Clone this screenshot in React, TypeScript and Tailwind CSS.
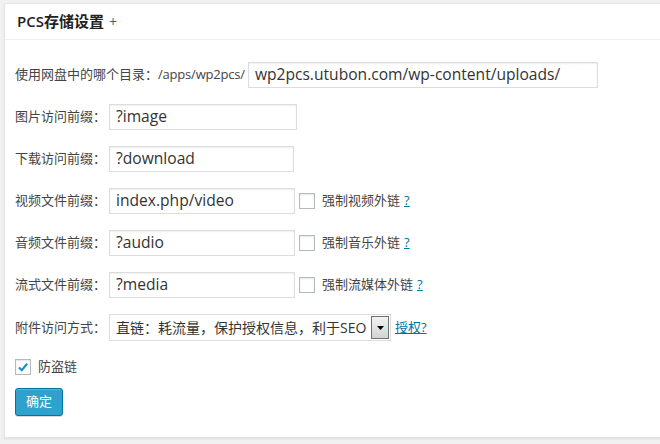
import React from 'react';

const font = "font-['Open_Sans','Noto_Sans_CJK_SC',sans-serif]";

const TextField = ({ value, width }: { value: string; width: string }) => (
  <div
    className={`h-[26px] ${width} border border-[#ddd] bg-white shadow-[inset_0_1px_2px_rgba(0,0,0,0.07)] flex items-center px-[6px] text-[15.6px] text-[#333] whitespace-nowrap overflow-hidden`}
  >
    {value}
  </div>
);

const CheckBox = ({ checked }: { checked?: boolean }) => (
  <div className="w-[16px] h-[16px] border border-[#b4b9be] bg-white shadow-[inset_0_1px_2px_rgba(0,0,0,0.1)] flex items-center justify-center shrink-0">
    {checked && (
      <svg width="12" height="12" viewBox="0 0 12 12">
        <path d="M2 6.5 L4.8 9.2 L10.2 2.6" fill="none" stroke="#1e8cbe" strokeWidth="2.2" />
      </svg>
    )}
  </div>
);

const HelpLink = ({ text }: { text: string }) => (
  <a href="#" className="text-[#0074a2] underline text-[13px] ml-[4px]">{text}</a>
);

// Rows with an optional "force external link" checkbox
const rows = [
  { label: '图片访问前缀：', value: '?image', width: 'w-[188px]' },
  { label: '下载访问前缀：', value: '?download', width: 'w-[185px]' },
  { label: '视频文件前缀：', value: 'index.php/video', width: 'w-[186px]', force: '强制视频外链' },
  { label: '音频文件前缀：', value: '?audio', width: 'w-[186px]', force: '强制音乐外链' },
  { label: '流式文件前缀：', value: '?media', width: 'w-[186px]', force: '强制流媒体外链' },
];

export default function App() {
  return (
    <div className={`w-[660px] h-[444px] bg-[#f1f1f1] overflow-hidden pt-[3px] pl-[4px] ${font}`}>
      <div className="w-[700px] h-[435px] bg-white border border-[#e5e5e5] shadow-[0_1px_2px_rgba(0,0,0,0.08)]">
        <div className="h-[36px] border-b border-[#eee] flex items-center pl-[12px]">
          <span className="text-[15px] font-semibold text-[#222]">PCS存储设置</span>
          <span className="text-[14px] text-[#0074a2] ml-[5px]">+</span>
        </div>

        <div className="pl-[10px] pt-[22px] text-[13px] text-[#444]">
          <div className="flex flex-col gap-[16px]">
            <div className="flex items-center h-[26px]">
              <span>使用网盘中的哪个目录：</span>
              <span className="tracking-[-0.2px]">/apps/wp2pcs/</span>
              <div className="ml-[3px]">
                <TextField value="wp2pcs.utubon.com/wp-content/uploads/" width="w-[350px]" />
              </div>
            </div>

            {rows.map((r) => (
              <div key={r.label} className="flex items-center h-[26px]">
                <span>{r.label}</span>
                <div className="ml-[3px]">
                  <TextField value={r.value} width={r.width} />
                </div>
                {r.force && (
                  <div className="flex items-center ml-[4px]">
                    <CheckBox />
                    <span className="ml-[7px]">{r.force}</span>
                    <HelpLink text="?" />
                  </div>
                )}
              </div>
            ))}

            <div className="flex items-center h-[27px]">
              <span>附件访问方式：</span>
              <div className="ml-[3px] h-[27px] w-[282px] border border-[#ddd] bg-white flex items-center pl-[6px] pr-[1px] text-[14px] text-[#333]">
                <span className="flex-1 whitespace-nowrap overflow-hidden">直链：耗流量，保护授权信息，利于SEO</span>
                <div className="w-[18px] h-[23px] border border-[#707070] bg-gradient-to-b from-[#f2f2f2] to-[#d4d4d4] flex items-center justify-center">
                  <svg width="7" height="4" viewBox="0 0 7 4">
                    <path d="M0 0 H7 L3.5 4 Z" fill="#000" />
                  </svg>
                </div>
              </div>
              <HelpLink text="授权?" />
            </div>
          </div>

          <div className="flex items-center mt-[18px] h-[16px]">
            <CheckBox checked />
            <span className="ml-[7px]">防盗链</span>
          </div>

          <button className="mt-[13px] h-[28px] px-[10px] rounded-[3px] border border-[#0074a2] bg-[#2ea2cc] text-white text-[13px] shadow-[inset_0_1px_0_rgba(120,200,230,0.5),0_1px_0_rgba(0,0,0,0.15)]">
            确定
          </button>
        </div>
      </div>
    </div>
  );
}
